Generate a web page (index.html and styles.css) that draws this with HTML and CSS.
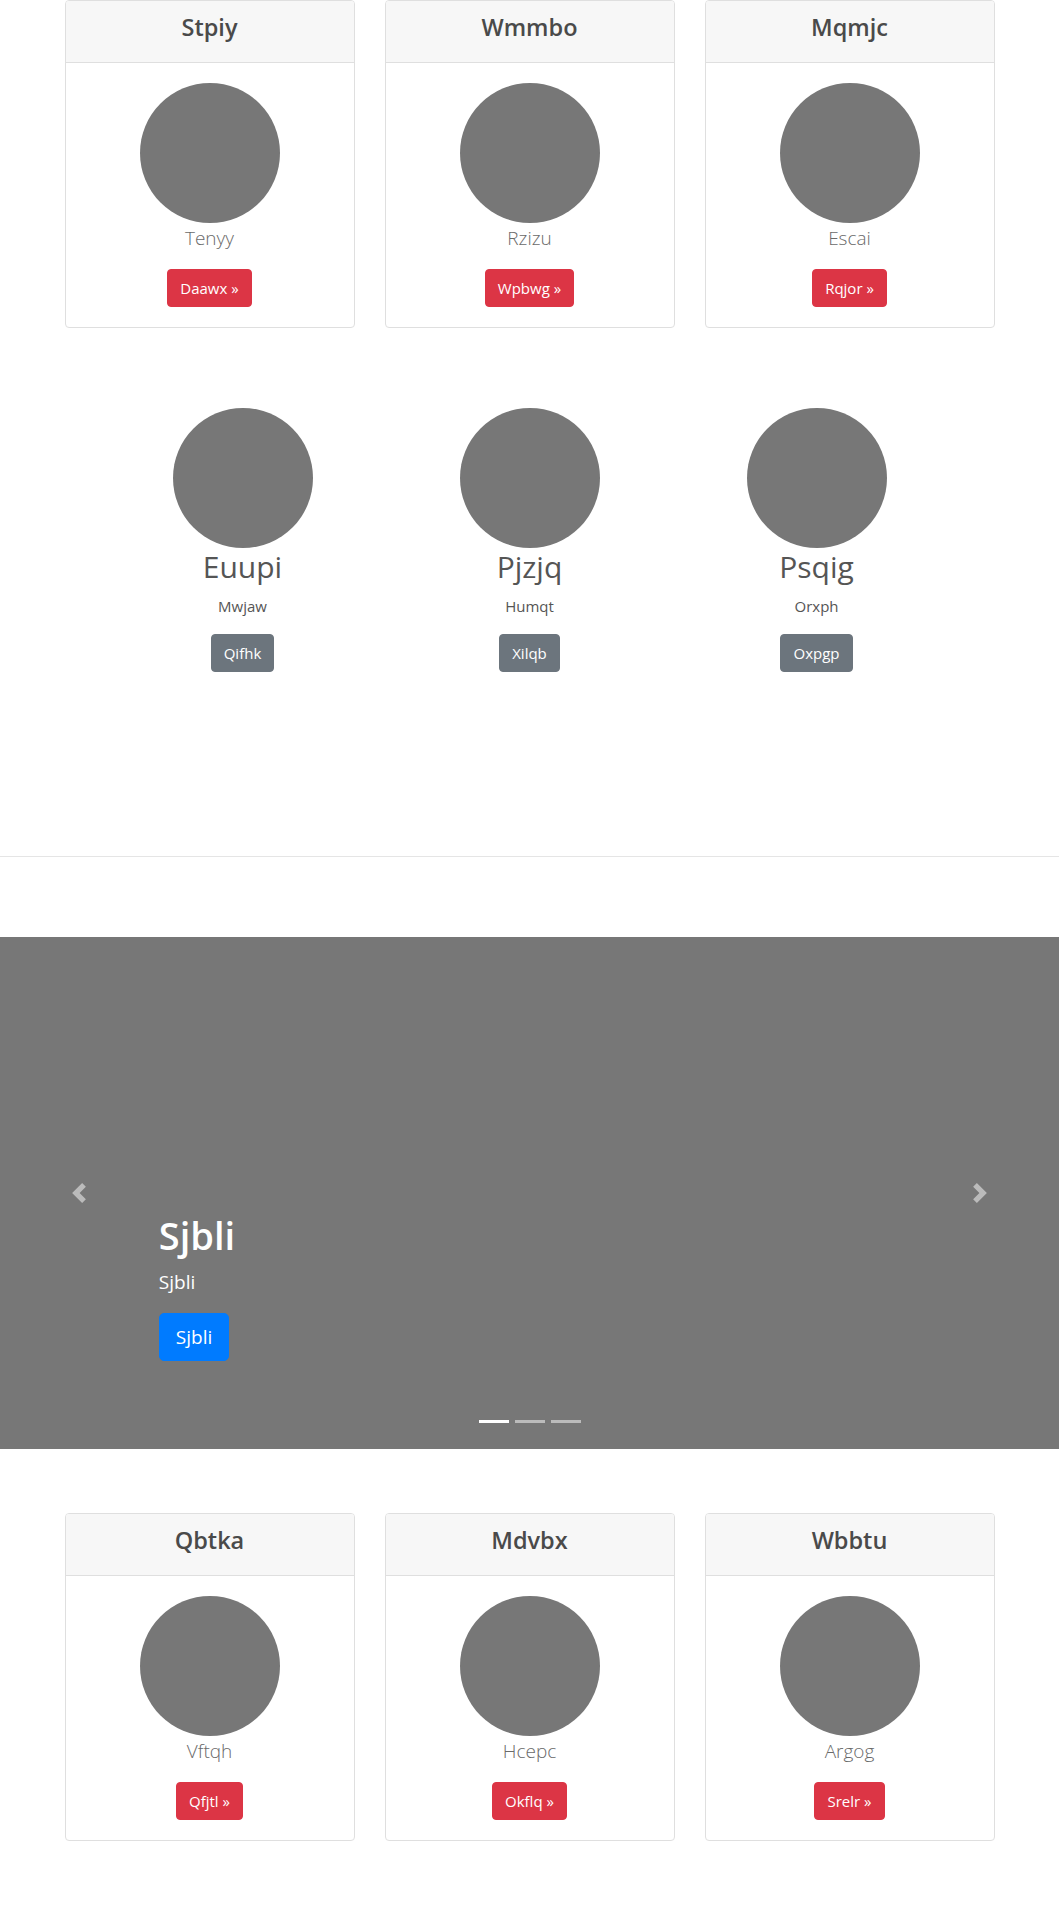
FILE: index.html
```html
<!DOCTYPE html>
<html lang="en">
<head>
<meta charset="utf-8">
<title>Cards</title>
<link rel="stylesheet" href="styles.css">
</head>
<body>
<div class="container">
  <div class="card-row">
    <div class="card">
      <div class="card-header"><h4>Stpiy</h4></div>
      <div class="card-body">
        <div class="avatar"></div>
        <p class="lead">Tenyy</p>
        <a class="btn btn-danger" href="#">Daawx &raquo;</a>
      </div>
    </div>
    <div class="card">
      <div class="card-header"><h4>Wmmbo</h4></div>
      <div class="card-body">
        <div class="avatar"></div>
        <p class="lead">Rzizu</p>
        <a class="btn btn-danger" href="#">Wpbwg &raquo;</a>
      </div>
    </div>
    <div class="card">
      <div class="card-header"><h4>Mqmjc</h4></div>
      <div class="card-body">
        <div class="avatar"></div>
        <p class="lead">Escai</p>
        <a class="btn btn-danger" href="#">Rqjor &raquo;</a>
      </div>
    </div>
  </div>
</div>

<div class="marketing">
  <div class="feature">
    <div class="avatar"></div>
    <h2>Euupi</h2>
    <p>Mwjaw</p>
    <p class="btn-line"><a class="btn btn-secondary" href="#">Qifhk</a></p>
  </div>
  <div class="feature">
    <div class="avatar"></div>
    <h2>Pjzjq</h2>
    <p>Humqt</p>
    <p class="btn-line"><a class="btn btn-secondary" href="#">Xilqb</a></p>
  </div>
  <div class="feature">
    <div class="avatar"></div>
    <h2>Psqig</h2>
    <p>Orxph</p>
    <p class="btn-line"><a class="btn btn-secondary" href="#">Oxpgp</a></p>
  </div>
</div>

<hr class="divider">

<div class="carousel">
  <ol class="indicators">
    <li class="active"></li>
    <li></li>
    <li></li>
  </ol>
  <div class="caption">
    <h1>Sjbli</h1>
    <p>Sjbli</p>
    <p class="btn-line"><a class="btn btn-lg btn-primary" href="#">Sjbli</a></p>
  </div>
  <a class="control control-prev" href="#">
    <svg width="20" height="20" viewBox="0 0 8 8" fill="#fff"><path d="M5.25 0l-4 4 4 4 1.5-1.5-2.5-2.5 2.5-2.5-1.5-1.5z"/></svg>
  </a>
  <a class="control control-next" href="#">
    <svg width="20" height="20" viewBox="0 0 8 8" fill="#fff"><path d="M2.75 0l-1.5 1.5 2.5 2.5-2.5 2.5 1.5 1.5 4-4-4-4z"/></svg>
  </a>
</div>

<div class="container">
  <div class="card-row">
    <div class="card">
      <div class="card-header"><h4>Qbtka</h4></div>
      <div class="card-body">
        <div class="avatar"></div>
        <p class="lead">Vftqh</p>
        <a class="btn btn-danger" href="#">Qfjtl &raquo;</a>
      </div>
    </div>
    <div class="card">
      <div class="card-header"><h4>Mdvbx</h4></div>
      <div class="card-body">
        <div class="avatar"></div>
        <p class="lead">Hcepc</p>
        <a class="btn btn-danger" href="#">Okflq &raquo;</a>
      </div>
    </div>
    <div class="card">
      <div class="card-header"><h4>Wbbtu</h4></div>
      <div class="card-body">
        <div class="avatar"></div>
        <p class="lead">Argog</p>
        <a class="btn btn-danger" href="#">Srelr &raquo;</a>
      </div>
    </div>
  </div>
</div>
</body>
</html>
```

FILE: styles.css
```css
* { box-sizing: border-box; }

html, body {
  margin: 0;
  padding: 0;
  background: #fff;
}

body {
  font-family: "Open Sans", "Noto Sans", "Liberation Sans", sans-serif;
  font-size: 16px;
  line-height: 1.5;
  color: #555;
  height: 1920px;
}

h1, h2, h4, p { margin: 0; }

.container {
  width: 960px;
  margin: 0 auto;
  padding: 0 15px;
}

.card-row {
  display: grid;
  grid-template-columns: repeat(3, 290px);
  column-gap: 30px;
}

.card {
  border: 1px solid #dfdfdf;
  border-radius: 4px;
  background: #fff;
  overflow: hidden;
}

.card-header {
  background: #f7f7f7;
  border-bottom: 1px solid #dfdfdf;
  padding: 12px 20px;
  text-align: center;
}

.card-header h4 {
  font-size: 23.5px;
  line-height: 28.8px;
  font-weight: 600;
  margin-bottom: 8px;
  color: #4a4a4a;
}

.card-body {
  padding: 20px;
  display: flex;
  flex-direction: column;
  align-items: center;
}

.avatar {
  width: 140px;
  height: 140px;
  border-radius: 50%;
  background: #777;
  margin: 0 auto;
}

.lead {
  font-size: 19px;
  line-height: 30px;
  font-weight: 300;
  color: #6a6a6a;
  margin-bottom: 16px;
  text-align: center;
}

.btn {
  display: inline-block;
  font-size: 15px;
  line-height: 24px;
  padding: 6px 12px;
  border: 1px solid transparent;
  border-radius: 4px;
  color: #fff;
  text-decoration: none;
  font-weight: 400;
}

.btn-danger { background: #dc3545; border-color: #dc3545; }
.btn-secondary { background: #6c757d; border-color: #6c757d; }
.btn-primary { background: #007bff; border-color: #007bff; }

.btn-lg {
  font-size: 19px;
  line-height: 30px;
  padding: 8px 16px;
  border-radius: 5px;
}

.btn-line {
  display: flex;
}

/* marketing */
.marketing {
  margin-top: 80px;
  display: grid;
  grid-template-columns: repeat(3, 287px);
  justify-content: center;
}

.feature {
  text-align: center;
  margin-bottom: 24px;
}

.feature h2 {
  font-size: 30px;
  line-height: 38.4px;
  font-weight: 400;
  margin-bottom: 8px;
  color: #555;
}

.feature p {
  font-size: 15px;
  line-height: 24px;
  margin: 0 12px 16px;
}

.feature .btn-line {
  justify-content: center;
}

.divider {
  border: 0;
  border-top: 1px solid #e5e5e5;
  margin: 144px 0 80px;
  height: 0;
}

/* carousel */
.carousel {
  position: relative;
  height: 512px;
  background: #777;
  margin-bottom: 64px;
  overflow: hidden;
}

.caption {
  position: absolute;
  left: 15%;
  right: 15%;
  bottom: 52px;
  padding: 20px 0;
  color: #fff;
  text-align: left;
  z-index: 10;
}

.caption h1 {
  font-size: 38px;
  line-height: 48px;
  font-weight: 600;
  margin-bottom: 8px;
}

.caption p {
  font-size: 19px;
  line-height: 30px;
  margin-bottom: 16px;
}

.control {
  position: absolute;
  top: 0;
  bottom: 0;
  width: 15%;
  display: flex;
  align-items: center;
  justify-content: center;
  opacity: .5;
}

.control-prev { left: 0; }
.control-next { right: 0; }

.indicators {
  position: absolute;
  left: 0;
  right: 0;
  bottom: 0;
  z-index: 15;
  display: flex;
  justify-content: center;
  list-style: none;
  padding: 0;
  margin: 0 15% 16px;
}

.indicators li {
  box-sizing: content-box;
  width: 30px;
  height: 3px;
  margin: 0 3px;
  background: #fff;
  background-clip: padding-box;
  border-top: 10px solid transparent;
  border-bottom: 10px solid transparent;
  opacity: .5;
}

.indicators li.active { opacity: 1; }
```
